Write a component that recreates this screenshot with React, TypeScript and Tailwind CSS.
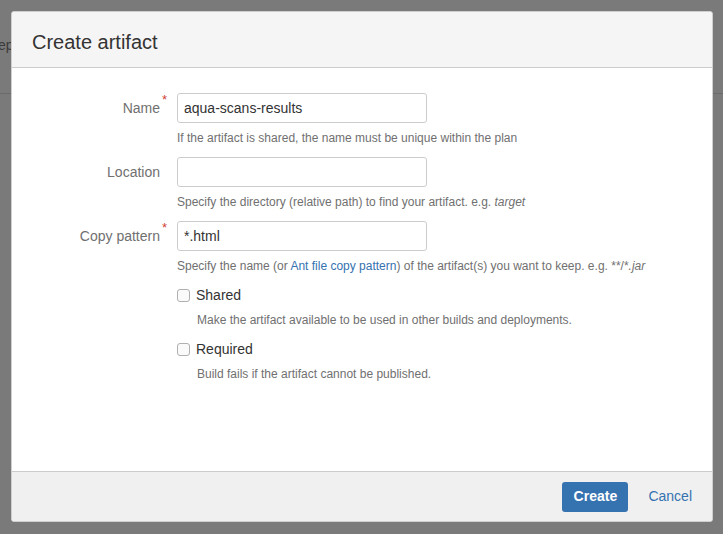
import React from "react";

const font = { fontFamily: '"Liberation Sans", Arial, sans-serif' };

function Required() {
  return <span className="absolute -right-[7px] -top-[3px] text-[13px] text-[#d04437]">*</span>;
}

function TextRow({ label, required, value, help }: { label: string; required?: boolean; value: string; help: React.ReactNode }) {
  return (
    <div className="flex">
      <div className="w-[148px] shrink-0 text-right">
        <label className="relative inline-block pt-[5px] text-[14px] leading-[20px] text-[#707070]">
          {label}
          {required && <Required />}
        </label>
      </div>
      <div className="ml-[17px]">
        <input
          defaultValue={value}
          className="block h-[30px] w-[250px] rounded-[3px] border border-[#cccccc] bg-white px-[6px] text-[14px] text-[#333333] outline-none"
        />
        <div className="mt-[7px] text-[12px] leading-[16px] text-[#707070]">{help}</div>
      </div>
    </div>
  );
}

function CheckRow({ label, help }: { label: string; help: string }) {
  return (
    <div className="ml-[165px]">
      <label className="flex items-center text-[14px] leading-[20px] text-[#333333]">
        <span className="mr-[6px] inline-block h-[13px] w-[13px] rounded-[3px] border border-[#b0b0b0] bg-[#fafafa]" />
        {label}
      </label>
      <div className="ml-[20px] mt-[7px] text-[12px] leading-[16px] text-[#707070]">{help}</div>
    </div>
  );
}

export default function App() {
  return (
    <div className="relative h-[534px] w-[723px] overflow-hidden bg-[#7a7a7a]" style={font}>
      {/* page behind the overlay */}
      <div className="h-[94px] border-b border-[#6b6b6b] pt-[35px] text-[14px] text-[#3a3a3a]">
        <span className="-ml-[2px]">ep</span>
      </div>

      <div className="absolute left-[11px] top-[11px] flex h-[511px] w-[702px] flex-col overflow-hidden rounded-[3px] border border-[#cfcfcf] bg-white">
        <div className="flex h-[56px] shrink-0 items-center border-b border-[#cccccc] bg-[#f5f5f5] px-[20px] pt-[4px]">
          <h2 className="text-[20px] leading-[24px] text-[#333333]">Create artifact</h2>
        </div>

        <div className="flex flex-1 flex-col gap-[11px] pt-[25px]">
          <TextRow
            label="Name"
            required
            value="aqua-scans-results"
            help="If the artifact is shared, the name must be unique within the plan"
          />
          <TextRow
            label="Location"
            value=""
            help={<>Specify the directory (relative path) to find your artifact. e.g. <i>target</i></>}
          />
          <TextRow
            label="Copy pattern"
            required
            value="*.html"
            help={
              <>
                Specify the name (or <a className="text-[#3572b0]">Ant file copy pattern</a>) of the artifact(s) you want to keep. e.g. **/*<i>.jar</i>
              </>
            }
          />
          <div className="flex flex-col gap-[11px]">
            <CheckRow label="Shared" help="Make the artifact available to be used in other builds and deployments." />
            <CheckRow label="Required" help="Build fails if the artifact cannot be published." />
          </div>
        </div>

        <div className="flex h-[50px] shrink-0 items-center justify-end gap-[20px] border-t border-[#cccccc] bg-[#f0f0f0] pr-[20px]">
          <button className="h-[30px] w-[66px] rounded-[3px] bg-[#3572b0] text-[14px] font-bold text-white">Create</button>
          <a className="text-[14px] text-[#3572b0]">Cancel</a>
        </div>
      </div>
    </div>
  );
}
